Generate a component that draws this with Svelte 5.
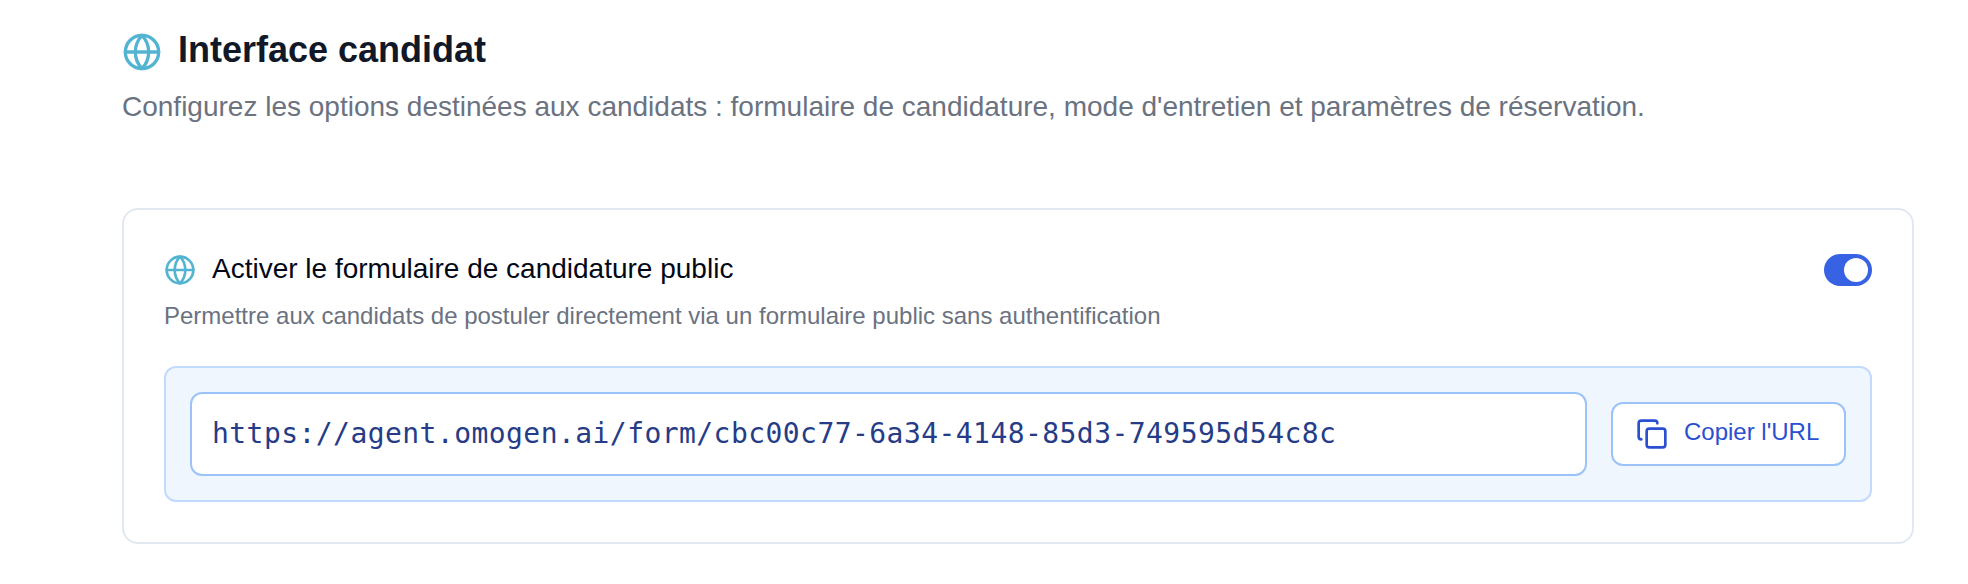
<script>
  let enabled = $state(true);
  let copied = $state(false);

  const title = 'Interface candidat';
  const formUrl = 'https://agent.omogen.ai/form/cbc00c77-6a34-4148-85d3-749595d54c8c';

  function toggle() { enabled = !enabled; }

  async function copyUrl() {
    await navigator.clipboard?.writeText(formUrl);
    copied = true;
    setTimeout(() => (copied = false), 2000);
  }
</script>

{#snippet globe(size)}
  <svg class="globe" width={size} height={size} viewBox="0 0 24 24" aria-hidden="true">
    <circle cx="12" cy="12" r="10" />
    <path d="M12 2a14.5 14.5 0 0 0 0 20 14.5 14.5 0 0 0 0-20" />
    <path d="M2 12h20" />
  </svg>
{/snippet}

<main class="page">
  <header class="page-header">
    <h1>
      {@render globe(40)}
      <span class="title">{title}</span>
    </h1>
    <p class="subtitle">Configurez les options destinées aux candidats : formulaire de candidature, mode d'entretien et paramètres de réservation.</p>
  </header>

  <section class="card">
    <div class="setting">
      <div class="setting-text">
        <div class="setting-label">
          {@render globe(32)}
          <span class="label">Activer le formulaire de candidature public</span>
        </div>
        <p class="description">Permettre aux candidats de postuler directement via un formulaire public sans authentification</p>
      </div>
      <button
        class="switch"
        class:on={enabled}
        role="switch"
        aria-checked={enabled}
        aria-label="Activer le formulaire"
        onclick={toggle}
      >
        <span class="thumb"></span>
      </button>
    </div>

    {#if enabled}
      <div class="url-panel">
        <code class="url">{formUrl}</code>
        <button class="copy-btn" class:copied onclick={copyUrl}>
          <svg width="32" height="32" viewBox="0 0 24 24" aria-hidden="true">
            <rect x="8" y="8" width="14" height="14" rx="2" />
            <path d="M4 16c-1.1 0-2-.9-2-2V4c0-1.1.9-2 2-2h10c1.1 0 2 .9 2 2" />
          </svg>
          <span class="copy-label">Copier l'URL</span>
        </button>
      </div>
    {/if}
  </section>
</main>

<style>
  :global(body) {
    margin: 0;
    background: #fff;
  }

  .page {
    box-sizing: border-box;
    height: 584px;
    padding: 24px 54px 40px 122px;
    font-family: 'Liberation Sans', Arial, sans-serif;
    color: #020817;
  }

  svg {
    flex-shrink: 0;
    fill: none;
    stroke: currentColor;
    stroke-width: 2;
    stroke-linecap: round;
    stroke-linejoin: round;
  }

  .globe {
    color: #53b4d2;
  }

  h1,
  p {
    margin: 0;
  }

  .page-header {
    height: 184px;
  }

  h1 {
    display: flex;
    align-items: center;
    gap: 16px;
    height: 56px;
    font-size: 36px;
    font-weight: 700;
    line-height: 56px;
    color: #111827;
  }

  .title,
  .subtitle,
  .label,
  .description,
  .copy-label {
    white-space: nowrap;
  }

  .title {
    padding-bottom: 4px;
  }

  .subtitle {
    font-size: 28px;
    line-height: 40px;
    margin-top: 7px;
    color: #6b7280;
  }

  /* Setting card */
  .card {
    box-sizing: border-box;
    height: 336px;
    padding: 40px;
    border: 2px solid #e2e8f0;
    border-radius: 16px;
  }

  .setting {
    display: flex;
    justify-content: space-between;
    height: 116px;
  }

  .setting-label {
    display: flex;
    align-items: center;
    gap: 16px;
    height: 40px;
    font-size: 28px;
    line-height: 40px;
  }

  .label {
    padding-bottom: 2px;
  }

  .description {
    margin-top: 10px;
    font-size: 24px;
    line-height: 32px;
    color: #6b7280;
  }

  .switch {
    display: flex;
    box-sizing: border-box;
    width: 48px;
    height: 32px;
    margin-top: 4px;
    padding: 4px;
    border: 0;
    border-radius: 16px;
    background: #cbd5e1;
    cursor: pointer;
  }

  .switch.on {
    justify-content: flex-end;
    background: #3762e3;
  }

  .thumb {
    width: 24px;
    height: 24px;
    border-radius: 50%;
    background: #fff;
  }

  /* Public URL */
  .url-panel {
    display: flex;
    align-items: center;
    gap: 24px;
    box-sizing: border-box;
    height: 136px;
    padding: 24px;
    border: 2px solid #c2dafc;
    border-radius: 12px;
    background: #eff6fe;
  }

  .url {
    flex: 1;
    box-sizing: border-box;
    height: 84px;
    padding: 20px;
    border: 2px solid #9bc3fa;
    border-radius: 12px;
    background: #fff;
    font-family: 'DejaVu Sans Mono', monospace;
    font-size: 28px;
    line-height: 40px;
    letter-spacing: 0.44px;
    color: #263c87;
    white-space: nowrap;
  }

  .copy-btn {
    display: flex;
    align-items: center;
    gap: 16px;
    box-sizing: border-box;
    width: 235px;
    height: 64px;
    padding: 0 23px;
    border: 2px solid #9bc3fa;
    border-radius: 12px;
    background: #fff;
    font-family: inherit;
    font-size: 24px;
    color: #2a4fd1;
    cursor: pointer;
  }

  .copy-label {
    padding-bottom: 4px;
  }

  .copy-btn.copied {
    background: #eff6ff;
  }
</style>
